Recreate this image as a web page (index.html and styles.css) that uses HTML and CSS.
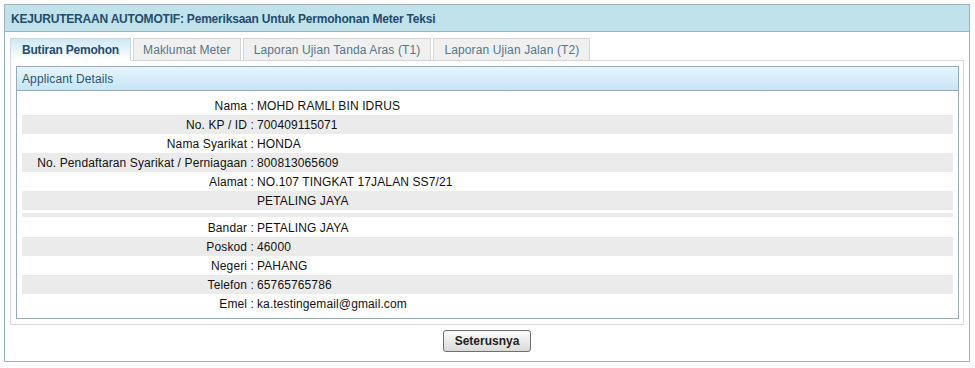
FILE: index.html
```html
<!DOCTYPE html>
<html>
<head>
<meta charset="utf-8">
<link rel="stylesheet" href="styles.css">
</head>
<body>
<div class="panel">
  <div class="panel-header">KEJURUTERAAN AUTOMOTIF: Pemeriksaan Untuk Permohonan Meter Teksi</div>
  <div class="panel-body">
    <div class="tabs">
      <div class="tab active">Butiran Pemohon</div>
      <div class="tab narrow">Maklumat Meter</div>
      <div class="tab">Laporan Ujian Tanda Aras (T1)</div>
      <div class="tab">Laporan Ujian Jalan (T2)</div>
    </div>
    <div class="tab-panel">
      <div class="box">
        <div class="box-header">Applicant Details</div>
        <div class="box-body">
          <div class="row"><div class="label">Nama :</div><div class="value">MOHD RAMLI BIN IDRUS</div></div>
          <div class="row alt"><div class="label">No. KP / ID :</div><div class="value">700409115071</div></div>
          <div class="row"><div class="label">Nama Syarikat :</div><div class="value">HONDA</div></div>
          <div class="row alt"><div class="label">No. Pendaftaran Syarikat / Perniagaan :</div><div class="value">800813065609</div></div>
          <div class="row"><div class="label">Alamat :</div><div class="value">NO.107 TINGKAT 17JALAN SS7/21</div></div>
          <div class="row alt"><div class="label"></div><div class="value">PETALING JAYA</div></div>
          <div class="sep"></div>
          <div class="row"><div class="label">Bandar :</div><div class="value">PETALING JAYA</div></div>
          <div class="row alt"><div class="label">Poskod :</div><div class="value">46000</div></div>
          <div class="row"><div class="label">Negeri :</div><div class="value">PAHANG</div></div>
          <div class="row alt"><div class="label">Telefon :</div><div class="value">65765765786</div></div>
          <div class="row"><div class="label">Emel :</div><div class="value">ka.testingemail@gmail.com</div></div>
        </div>
      </div>
    </div>
    <div class="actions"><button class="btn">Seterusnya</button></div>
  </div>
</div>
</body>
</html>
```
FILE: styles.css
```css
* { box-sizing: border-box; }
body {
  margin: 0;
  background: #fff;
  font-family: "Liberation Sans", Arial, sans-serif;
  font-size: 12px;
  color: #111;
  letter-spacing: 0.12px;
}
.panel {
  margin: 4px 0 0 4px;
  width: 966px;
  border: 1px solid #9ab4c0;
}
.panel-header {
  height: 27px;
  padding-top: 1px;
  line-height: 26px;
  background: #bfe2eb;
  border-bottom: 1px solid #9ab4c0;
  padding-left: 6px;
  font-weight: bold;
  letter-spacing: -0.2px;
  color: #1f4d6b;
}
.panel-body {
  padding: 6px 5px 9px 5px;
}
.tabs {
  display: flex;
  gap: 2px;
  position: relative;
  z-index: 1;
  margin-bottom: -1px;
}
.tab {
  height: 23px;
  padding-top: 1px;
  line-height: 21px;
  padding-left: 10px;
  padding-right: 10px;
  border: 1px solid #d6d6d6;
  background: #f0f0f0;
  color: #557688;
}
.tab.narrow {
  padding-left: 9px;
  padding-right: 9px;
}
.tab.active {
  padding-left: 11px;
  padding-right: 11px;
  font-weight: bold;
  letter-spacing: -0.2px;
  color: #1f4d6b;
  border-color: #c9d9e1;
  border-bottom-color: #fff;
  background: linear-gradient(#cde8f5, #ffffff);
}
.tab-panel {
  border: 1px solid #d6dadc;
  padding: 5px 4px 5px 5px;
}
.box {
  border: 1px solid #94adb9;
}
.box-header {
  height: 24px;
  padding-top: 1px;
  line-height: 23px;
  padding-left: 5px;
  border-bottom: 1px solid #94adb9;
  background: linear-gradient(#e7f5fd, #c6e5f7);
  color: #2b5572;
}
.box-body {
  padding: 5px 5px 5px 5px;
}
.row {
  display: flex;
  height: 19px;
  padding-top: 1px;
  line-height: 19px;
}
.row.alt { background: #ebebeb; }
.label {
  width: 232px;
  text-align: right;
  flex: none;
}
.value {
  padding-left: 3px;
}
.sep {
  height: 8px;
  border-top: 3px solid #fff;
  border-bottom: 1px solid #fff;
  background: #ebebeb;
}
.actions {
  display: flex;
  justify-content: center;
  margin-top: 5px;
}
.btn {
  width: 88px;
  height: 22px;
  padding: 0;
  border: 1px solid #6f6f6f;
  border-radius: 3px;
  background: linear-gradient(#fbfbfb, #dadada);
  font-family: "Liberation Sans", Arial, sans-serif;
  font-size: 12px;
  font-weight: bold;
  color: #222;
}
```
